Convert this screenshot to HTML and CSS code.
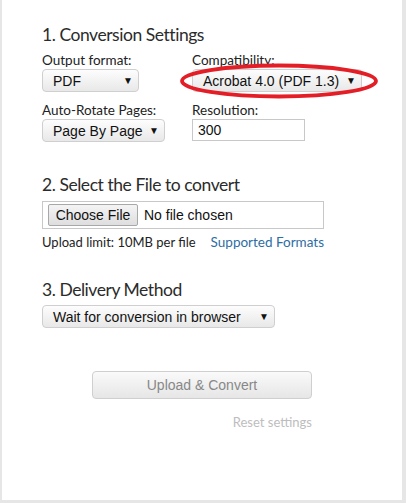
FILE: index.html
```html
<!DOCTYPE html>
<html>
<head>
<meta charset="utf-8">
<link rel="stylesheet" href="styles.css">
</head>
<body>
<div class="panel">
  <h2 class="heading h1">1. Conversion Settings</h2>
  <div class="row">
    <div class="field col-a">
      <label class="label">Output format:</label>
      <div class="select w-pdf"><span>PDF</span><span class="arrow">▼</span></div>
    </div>
    <div class="field">
      <label class="label">Compatibility:</label>
      <div class="select w-acro"><span>Acrobat 4.0 (PDF 1.3)</span><span class="arrow">▼</span>
        <svg class="ring" width="202" height="38" viewBox="0 0 202 38"><ellipse cx="100" cy="20" rx="97" ry="15.5" fill="none" stroke="#e41e26" stroke-width="3.8"/></svg>
      </div>
    </div>
  </div>
  <div class="row row2">
    <div class="field col-a">
      <label class="label">Auto-Rotate Pages:</label>
      <div class="select w-page"><span>Page By Page</span><span class="arrow">▼</span></div>
    </div>
    <div class="field">
      <label class="label">Resolution:</label>
      <div class="input">300</div>
    </div>
  </div>

  <h2 class="heading h2">2. Select the File to convert</h2>
  <div class="file">
    <span class="choose">Choose File</span><span class="nofile">No file chosen</span>
  </div>
  <div class="limit"><span>Upload limit: 10MB per file</span><a class="link">Supported Formats</a></div>

  <h2 class="heading h3">3. Delivery Method</h2>
  <div class="select w-wait"><span>Wait for conversion in browser</span><span class="arrow">▼</span></div>

  <div class="actions">
    <div class="btn">Upload &amp; Convert</div>
    <div class="reset">Reset settings</div>
  </div>
</div>
</body>
</html>
```

FILE: styles.css
```css
html, body {
  margin: 0;
  padding: 0;
}
body {
  background: #e6e6e6;
  width: 406px;
  height: 503px;
  overflow: hidden;
}
.panel {
  margin-left: 2px;
  width: 400px;
  height: 500px;
  background: #fff;
  box-sizing: border-box;
  padding: 23px 0 0 40px;
  font-family: "Lato", "Open Sans", sans-serif;
  color: #222;
}
.heading {
  margin: 0;
  font-weight: 400;
  font-size: 17.5px;
  letter-spacing: -0.45px;
  line-height: 23px;
  color: #2b2b2b;
  font-family: "Lato", sans-serif;
}
.row {
  display: flex;
  margin-top: 6px;
}
.row2 {
  margin-top: 10px;
}
.field {
  display: flex;
  flex-direction: column;
}
.col-a {
  width: 150px;
}
.label {
  font-size: 13.5px;
  line-height: 16px;
  color: #222;
  margin-bottom: 1px;
}
.select {
  position: relative;
  display: flex;
  align-items: center;
  justify-content: space-between;
  box-sizing: border-box;
  height: 23px;
  padding: 0 5px 0 10px;
  border: 1px solid #cfcfcf;
  border-radius: 4px;
  background: linear-gradient(#fdfdfd, #e8e8e8);
  font-family: "Liberation Sans", Arial, sans-serif;
  font-size: 14px;
  color: #111;
}
.arrow {
  font-size: 10px;
  color: #111;
}
.w-pdf { width: 97px; }
.w-acro { width: 170px; }
.w-page { width: 123px; }
.w-wait { width: 233px; margin-top: 4px; }
.ring {
  position: absolute;
  left: -14px;
  top: -9px;
}
.input {
  box-sizing: border-box;
  width: 113px;
  height: 22px;
  border: 1px solid #c8c8c8;
  padding: 1px 5px;
  font-family: "Liberation Sans", Arial, sans-serif;
  font-size: 14px;
  line-height: 18px;
  color: #111;
}
.h2 {
  margin-top: 31px;
}
.file {
  margin-top: 5px;
  box-sizing: border-box;
  width: 282px;
  height: 28px;
  border: 1px solid #c8c8c8;
  display: flex;
  align-items: center;
  padding-left: 5px;
  font-family: "Liberation Sans", Arial, sans-serif;
  font-size: 14px;
  color: #111;
}
.choose {
  box-sizing: border-box;
  height: 22px;
  width: 90px;
  border: 1px solid #a8a8a8;
  border-radius: 2px;
  background: linear-gradient(#f4f4f4, #dedede);
  display: flex;
  align-items: center;
  justify-content: center;
}
.nofile {
  margin-left: 6px;
}
.limit {
  margin-top: 5px;
  font-size: 13px;
  line-height: 16px;
  color: #222;
  display: flex;
  gap: 15px;
}
.link {
  color: #2d6da3;
  font-size: 13.5px;
}
.h3 {
  margin-top: 28px;
}
.actions {
  width: 270px;
  display: flex;
  flex-direction: column;
  align-items: flex-end;
  margin-top: 43px;
}
.btn {
  box-sizing: border-box;
  width: 220px;
  height: 28px;
  border: 1px solid #cfcfcf;
  border-radius: 4px;
  background: linear-gradient(#fafafa, #e6e6e6);
  font-family: "Liberation Sans", Arial, sans-serif;
  font-size: 14px;
  color: #888;
  display: flex;
  align-items: center;
  justify-content: center;
}
.reset {
  margin-top: 15px;
  font-size: 13px;
  line-height: 16px;
  color: #bdbdbd;
}
```
